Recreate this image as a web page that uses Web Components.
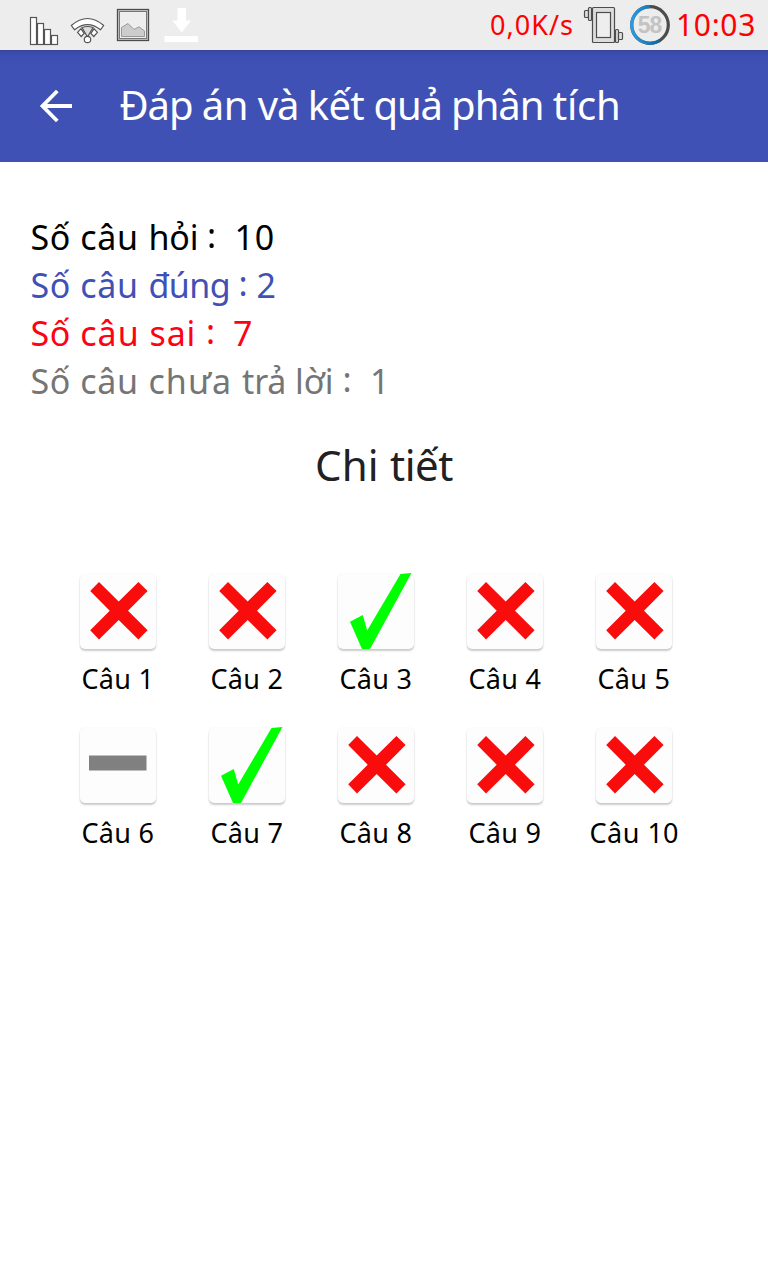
<!DOCTYPE html>
<html lang="vi">
<head>
<meta charset="utf-8">
<title>Đáp án và kết quả phân tích</title>
<style>
html,body{margin:0;height:100%;background:#fff;overflow:hidden}
body{font-family:"Noto Sans","Open Sans",sans-serif}
</style>
</head>
<body>
<quiz-result-app></quiz-result-app>
<script>
const define = (name, html, ready) => {
  const tpl = document.createElement('template');
  tpl.innerHTML = html.trim();
  customElements.define(name, class extends HTMLElement {
    constructor() {
      super();
      this.attachShadow({mode: 'open'}).appendChild(tpl.content.cloneNode(true));
    }
    connectedCallback() { if (ready) ready(this, this.shadowRoot); }
  });
};

// A line of text; "w" lists the advance width of each word with its trailing space.
define('tracked-text', `<style>:host{display:block;white-space:pre}span{display:inline-block;vertical-align:top}.colon{transform:translateY(-2px)}</style>`, (el, root) => {
  const widths = el.getAttribute('w').split(' ').map(Number);
  el.getAttribute('text').match(/\S+\s*/g).forEach((word, i) => {
    const span = document.createElement('span');
    span.textContent = word;
    if (word.trim() === ':') span.className = 'colon';
    root.appendChild(span);
    const natural = span.getBoundingClientRect().width;
    span.style.letterSpacing = ((widths[i] - natural) / word.length).toFixed(3) + 'px';
  });
});

define('status-bar', `
<style>
:host{display:flex;height:50px;background:#ededed;color:#f00;box-sizing:border-box;justify-content:space-between}
.l,.r{display:flex;height:50px}
svg{display:block;flex:none}
.speed{font-size:27px;line-height:50px;height:50px}
.time{font-size:30px;line-height:50px}
.r{padding-right:12px}
</style>
<div class="l">
<svg width="220" height="50" viewBox="0 0 220 50">
  <g fill="#fff" stroke="#555" stroke-width="1.2">
    <rect x="30.5" y="17.5" width="6" height="27"/><rect x="37.5" y="23.5" width="6" height="21"/>
    <rect x="44.5" y="29.5" width="6" height="15"/><rect x="51.5" y="35.5" width="6" height="9"/>
    <path d="M71.3 25.500Q87.500 11.500 103.700 25.500L100.400 29.800Q87.500 19.500 74.600 29.800Z" stroke-linejoin="round"/>
    <path d="M77.500 32.300L81 28.800L84.200 33.500L81.200 36.500Z"/>
    <path d="M97.500 32.300L94 28.800L90.800 33.500L93.800 36.500Z"/>
    <path d="M82 27.500Q87.500 25.500 93 27.500L87.500 37Z" fill="#ddd"/>
    <circle cx="87.500" cy="39.500" r="3.200"/>
  </g>
  <rect x="117.500" y="9.500" width="31" height="31" fill="#ccc" stroke="#4c4c4c" stroke-width="1.300"/>
  <rect x="119.500" y="11.500" width="27" height="27" fill="#eee" stroke="#777"/>
  <path d="M121.500 36.500V27.500L128 23.500L134 29.500L139 26.800L144.500 31V36.500Z" fill="#ccc" stroke="#999"/>
  <path fill="#fff" d="M177.500 8H186V20.500H191L181.700 32.500L172.300 20.500H177.500ZM164.500 36H198V42H164.500Z"/>
</svg>
</div>
<div class="r">
<tracked-text class="speed" text="0,0K/s" w="84"></tracked-text>
<svg width="102" height="50" viewBox="574 0 102 50">
  <defs><linearGradient id="g" x1="0" x2="1"><stop offset="0" stop-color="#2d9ae0"/><stop offset="1" stop-color="#0b67a8"/></linearGradient></defs>
  <g fill="#ddd" stroke="#4c4c4c" stroke-width="1.200">
    <rect x="584.500" y="10.500" width="4" height="7" rx="1"/><rect x="588.500" y="7.500" width="3" height="13" rx="1"/>
    <rect x="592.500" y="7.500" width="22" height="35" rx="1"/><rect x="596.500" y="12.500" width="14" height="25" fill="#eee"/>
    <rect x="615.500" y="29.500" width="3" height="13" rx="1"/><rect x="618.500" y="32.500" width="4" height="7" rx="1"/>
  </g>
  <g fill="none" stroke-width="3.200">
    <circle cx="650" cy="25" r="18.300" stroke="#4c4c4c"/>
    <path d="M650 6.700A18.300 18.300 0 1 0 659.800 40.500" stroke="url(#g)"/>
  </g>
  <text x="650" y="33.200" text-anchor="middle" textLength="24.500" font-family="Liberation Sans,sans-serif" font-weight="700" font-size="23" fill="#c3c3c3">58</text>
</svg>
<tracked-text class="time" text="10:03" w="80"></tracked-text>
</div>`);

define('app-bar', `
<style>
:host{display:flex;align-items:center;height:112px;box-sizing:border-box;padding:0 0 3px 38px;color:#fff;
background:linear-gradient(#33408c 0,#3849a4 1px,#3b4daf 4px,#3f51b5 16px);font-size:40px;line-height:60px}
svg{display:block;margin-right:45.500px;margin-top:3px}
</style>
<svg width="36" height="36" viewBox="0 0 36 36"><path d="M19.300 3L4.500 18L19.300 33M4.500 18H34" fill="none" stroke="#fff" stroke-width="3.800"/></svg>
<slot></slot>`);

define('score-summary', `
<style>
:host{display:flex;flex-direction:column;padding:51px 0 0 30.600px;font-size:34px;line-height:48px}
tracked-text{height:48px}
.all{color:#000}.ok{color:#3f51b5}.bad{color:#ff0014}.none{color:#757575}
</style>
<tracked-text class="all" text="Số câu hỏi :  10" w="49.7 68.1 58.6 27.5 40.5"></tracked-text>
<tracked-text class="ok" text="Số câu đúng : 2" w="49.7 68.1 90.1 18 19.5"></tracked-text>
<tracked-text class="bad" text="Số câu sai :  7" w="49.7 69.2 56.5 27 20.5"></tracked-text>
<tracked-text class="none" text="Số câu chưa trả lời :  1" w="49.7 68.1 93.6 53 47.5 27.5 20"></tracked-text>`);

define('answer-tile', `
<style>
:host{display:flex;flex-direction:column;align-items:center;height:154px;color:#000}
.tile{width:76px;height:75px;border-radius:5px;background:#fdfdfd;box-shadow:0 2px 2px rgba(0,0,0,.2),0 0 2px rgba(0,0,0,.07)}
svg{display:block;overflow:visible}
g{display:none}
:host([state=wrong]) .wrong,:host([state=right]) .right,:host([state=blank]) .blank{display:inline}
tracked-text{font-size:27px;line-height:36px;height:36px;margin-top:11.500px}
</style>
<div class="tile"><svg width="76" height="76" viewBox="0 0 76 76">
<g class="wrong"><path fill="#f80c0c" d="M10.200 17L19 8L38.700 27.500L58.400 8L67.600 17L48 36.700L67.600 56.300L58.400 65.500L38.700 46L19 65.500L10.200 56.300L29.700 36.700Z"/></g>
<g class="right"><path fill="#0f0" d="M12 47.800L24.800 41L29.200 56.500L62.500 0L73.500 -1L32 75H24Z"/></g>
<g class="blank"><path fill="#808080" d="M9 27.500H66.500V42.500H9Z"/></g>
</svg></div>`, (el, root) => {
  const n = el.getAttribute('n');
  const label = document.createElement('tracked-text');
  label.setAttribute('text', 'Câu ' + n);
  label.setAttribute('w', n.length > 1 ? '58 31' : '57 16');
  root.appendChild(label);
});

define('answer-grid', `
<style>:host{display:grid;grid-template-columns:repeat(5,129px);padding:79.500px 0 0 53.500px}</style>
<slot></slot>`);

define('quiz-result-app', `
<style>
:host{display:flex;flex-direction:column;width:768px;height:1280px;background:#fff}
.heading{align-self:center;font-size:42px;line-height:60px;height:60px;color:#212121;margin-top:29.500px}
</style>
<status-bar></status-bar>
<app-bar><tracked-text text="Đáp án và kết quả phân tích" w="82.3 56 50 65.7 77.6 101.7 67.5"></tracked-text></app-bar>
<score-summary></score-summary>
<tracked-text class="heading" text="Chi tiết" w="75 63"></tracked-text>
<answer-grid>
<answer-tile n="1" state="wrong"></answer-tile><answer-tile n="2" state="wrong"></answer-tile>
<answer-tile n="3" state="right"></answer-tile><answer-tile n="4" state="wrong"></answer-tile>
<answer-tile n="5" state="wrong"></answer-tile><answer-tile n="6" state="blank"></answer-tile>
<answer-tile n="7" state="right"></answer-tile><answer-tile n="8" state="wrong"></answer-tile>
<answer-tile n="9" state="wrong"></answer-tile><answer-tile n="10" state="wrong"></answer-tile>
</answer-grid>`);
</script>
</body>
</html>
